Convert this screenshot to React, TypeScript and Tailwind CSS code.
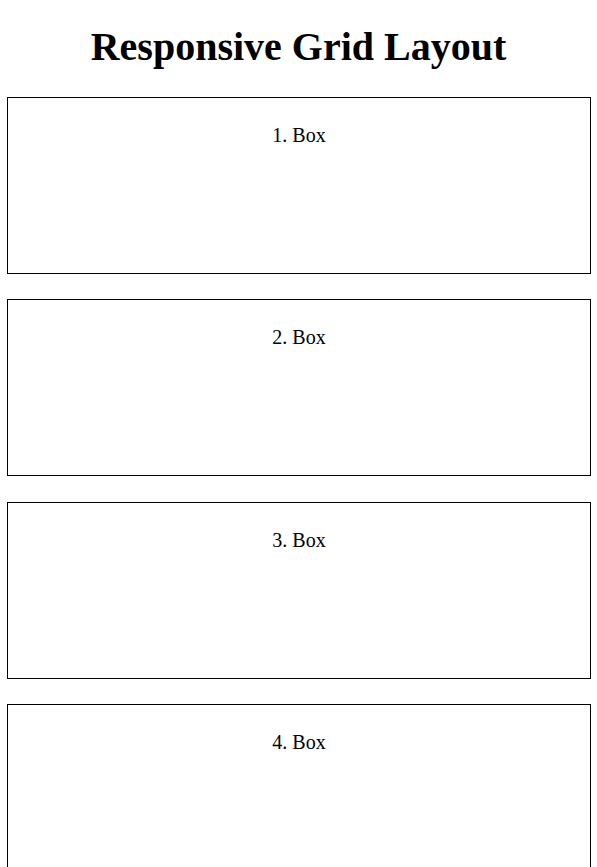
export default function App() {
  const boxes = [1, 2, 3, 4]
  return (
    <main className="min-h-screen bg-white px-[6px] font-['Liberation_Serif',serif] text-black">
      <h1 className="pt-[24px] pb-[27px] text-center text-[40px] leading-[46px] font-bold">
        Responsive Grid Layout
      </h1>
      <div className="grid grid-cols-1 gap-[25.4px] pl-[1px]">
        {boxes.map((n) => (
          <div key={n} className="h-[177px] border border-black pt-[26px] text-center text-[20px] leading-[23px]">
            {n}. Box
          </div>
        ))}
      </div>
    </main>
  )
}
